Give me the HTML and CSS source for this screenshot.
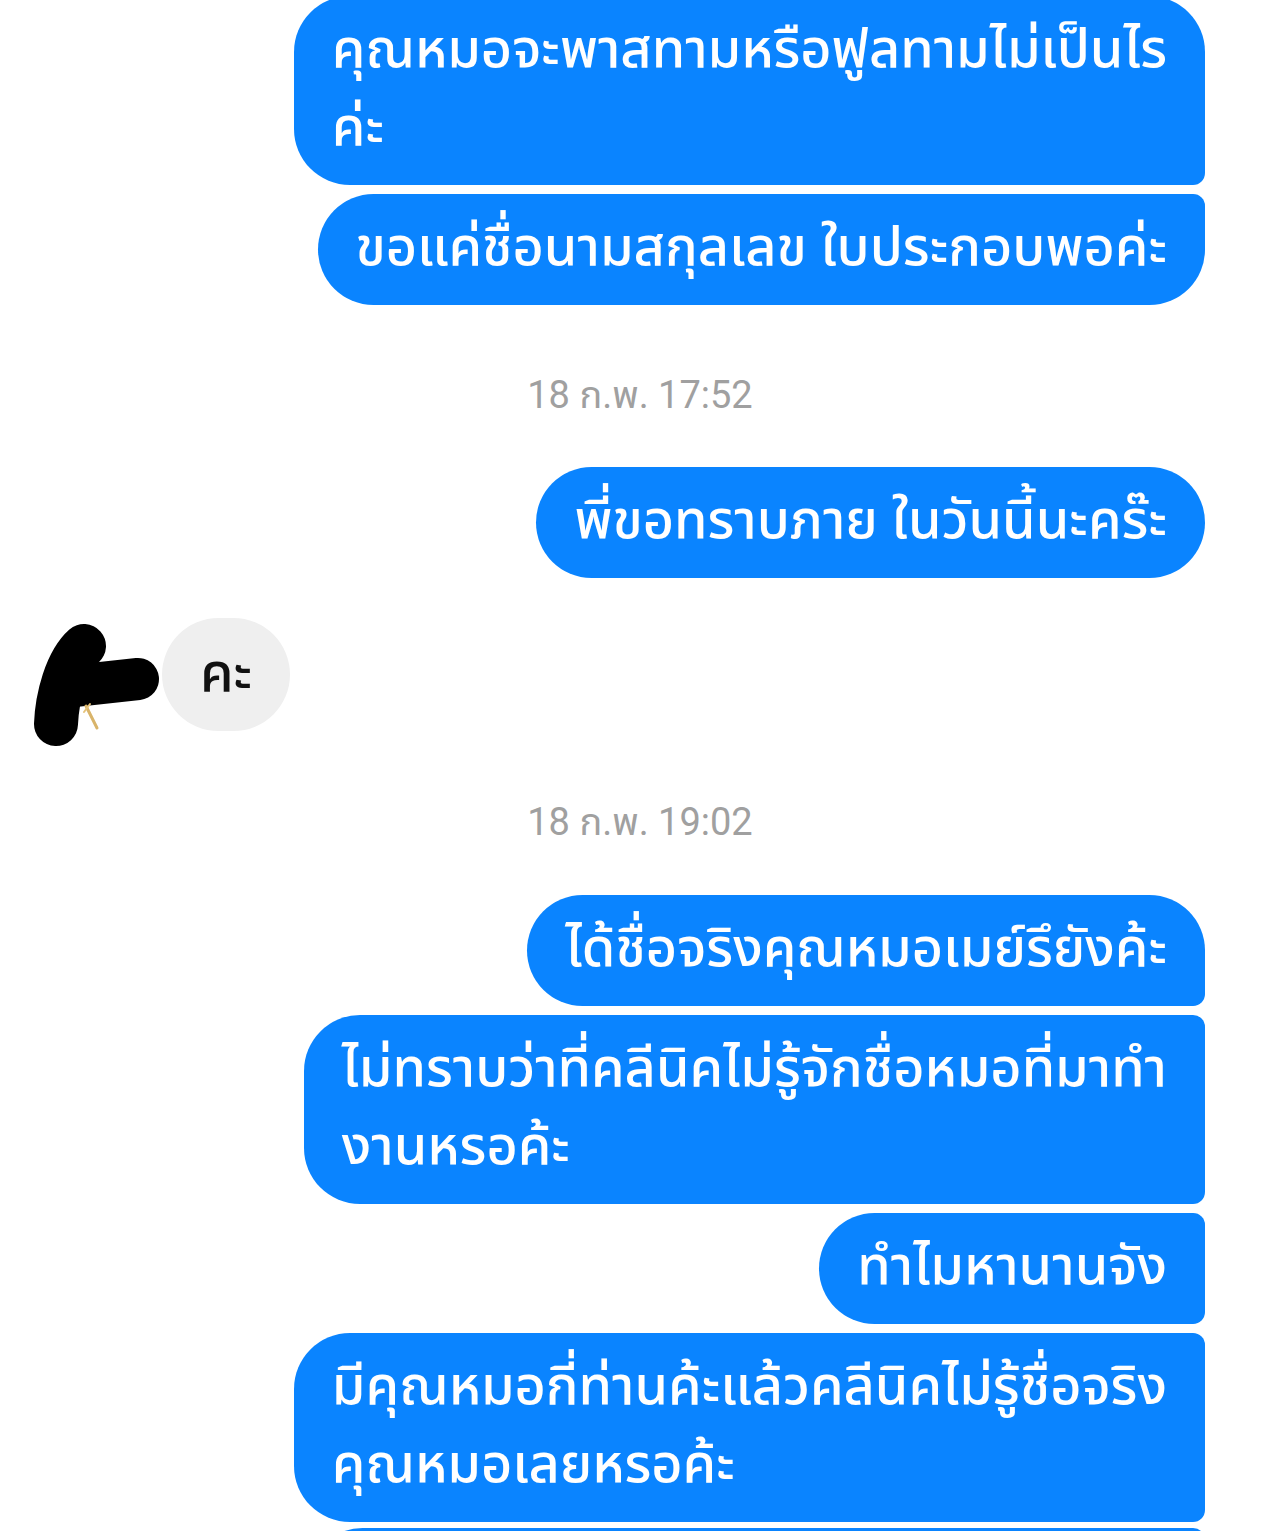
FILE: index.html
```html
<!DOCTYPE html>
<html lang="th">
<head>
<meta charset="utf-8">
<title>Chat</title>
<link rel="stylesheet" href="styles.css">
</head>
<body>
<div class="thread">
  <div class="bubble out first two">คุณหมอจะพาสทามหรือฟูลทามไม่เป็นไร<br>ค่ะ</div>
  <div class="bubble out last">ขอแค่ชื่อนามสกุลเลข ใบประกอบพอค่ะ</div>

  <div class="stamp stamp-a">18 ก.พ. 17:52</div>

  <div class="bubble out single">พี่ขอทราบภาย ในวันนี้นะคร๊ะ</div>

  <div class="in-row">
    <svg class="avatar" width="130" height="135" viewBox="30 618 130 135" aria-hidden="true">
      <path d="M84 646 C66 662 57 698 56 724" fill="none" stroke="#000" stroke-width="44" stroke-linecap="round"/>
      <path d="M74 686 L138 679" fill="none" stroke="#000" stroke-width="42" stroke-linecap="round"/>
      <path d="M86 706 L97 728" fill="none" stroke="#d9b46a" stroke-width="3" stroke-linecap="round"/>
      <path d="M84 712 L90 704" fill="none" stroke="#e6c37a" stroke-width="2" stroke-linecap="round"/>
    </svg>
    <div class="bubble in">คะ</div>
  </div>

  <div class="stamp stamp-b">18 ก.พ. 19:02</div>

  <div class="bubble out first">ได้ชื่อจริงคุณหมอเมย์รึยังค้ะ</div>
  <div class="bubble out mid two">ไม่ทราบว่าที่คลีนิคไม่รู้จักชื่อหมอที่มาทำ<br>งานหรอค้ะ</div>
  <div class="bubble out mid">ทำไมหานานจัง</div>
  <div class="bubble out mid two">มีคุณหมอกี่ท่านค้ะแล้วคลีนิคไม่รู้ชื่อจริง<br>คุณหมอเลยหรอค้ะ</div>
  <div class="bubble out mid tail"></div>
</div>
</body>
</html>
```

FILE: styles.css
```css
html, body {
  margin: 0;
  padding: 0;
  background: #ffffff;
}

body {
  width: 1280px;
  height: 1531px;
  overflow: hidden;
  font-family: "Noto Sans Thai", "Noto Sans Thai UI", "Loma", "Garuda", "Noto Sans", "DejaVu Sans", sans-serif;
}

.thread {
  display: flex;
  flex-direction: column;
  align-items: flex-end;
  padding-right: 75px;
  margin-top: -4px;
}

.bubble {
  box-sizing: border-box;
  padding: 16px 38px 17px 38px;
  font-size: 54px;
  font-weight: 500;
  line-height: 78px;
  white-space: nowrap;
  margin-bottom: 9px;
}

.bubble.out {
  background: #0a84ff;
  color: #ffffff;
  border-radius: 56px;
}

.bubble.out.first {
  border-radius: 56px 56px 12px 56px;
}

.bubble.out.last {
  border-radius: 56px 12px 56px 56px;
}

.bubble.out.mid {
  border-radius: 56px 12px 12px 56px;
}

.bubble.out.single {
  border-radius: 56px;
}

.bubble.tail {
  width: 898px;
  height: 111px;
  margin-top: -3px;
}

.stamp {
  align-self: center;
  font-family: "Roboto", "Noto Sans Thai", "Noto Sans", sans-serif;
  font-size: 38px;
  line-height: 40px;
  color: #a0a0a0;
  margin-right: -75px;
}

.stamp-a {
  margin-top: 61px;
  margin-bottom: 52px;
}

.stamp-b {
  margin-top: 49px;
  margin-bottom: 53px;
}

.in-row {
  align-self: flex-start;
  display: flex;
  align-items: flex-start;
  margin-top: 31px;
  padding-left: 30px;
}

.avatar {
  display: block;
  flex: none;
}

.bubble.in {
  margin-left: 2px;
  width: 128px;
  height: 113px;
  padding: 0;
  display: flex;
  align-items: center;
  justify-content: center;
  background: #efefef;
  color: #111111;
  border-radius: 57px;
  margin-bottom: 0;
}
```
